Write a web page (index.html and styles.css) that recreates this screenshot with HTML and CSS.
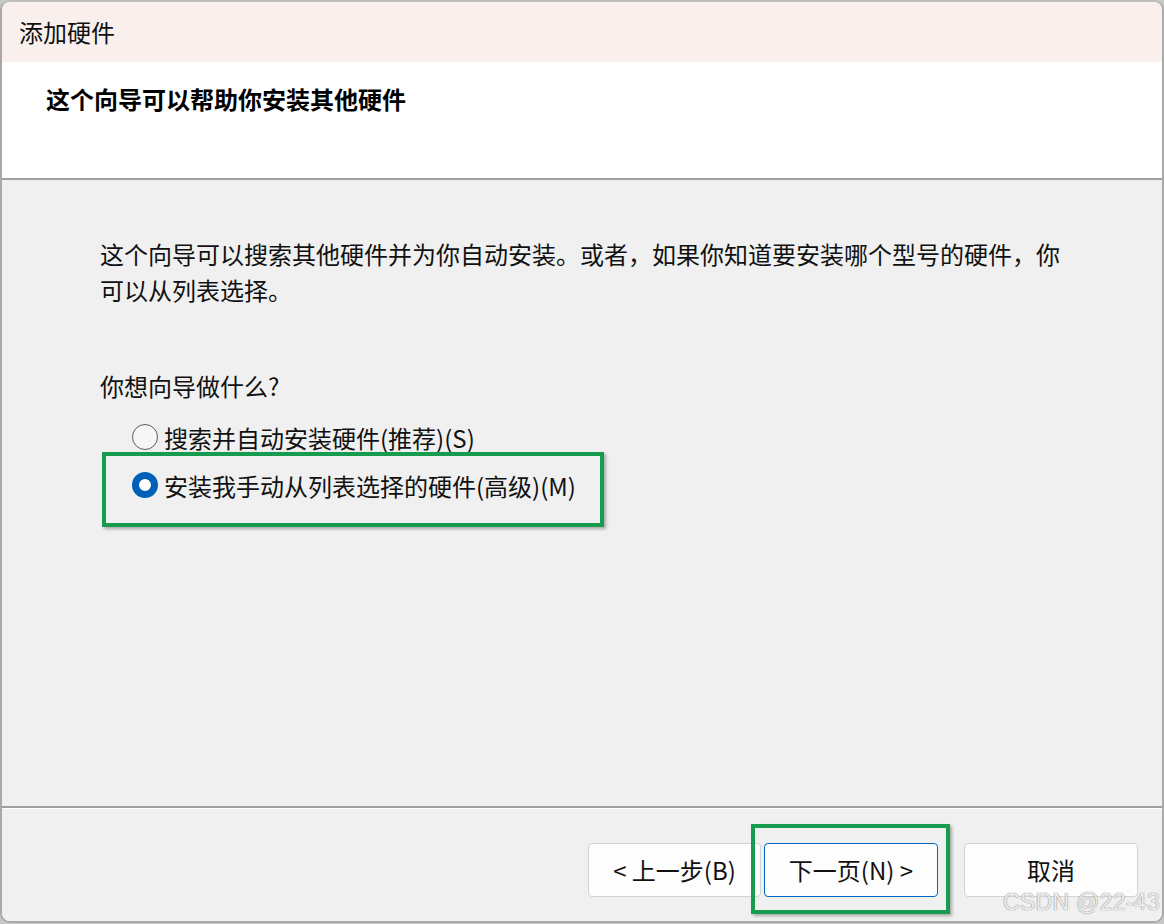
FILE: index.html
```html
<!DOCTYPE html>
<html lang="zh-CN">
<head>
<meta charset="utf-8">
<title>添加硬件</title>
<link rel="stylesheet" href="styles.css">
</head>
<body>
<div class="window">
  <div class="titlebar">添加硬件</div>
  <div class="header">
    <h1 class="header-title">这个向导可以帮助你安装其他硬件</h1>
  </div>
  <div class="content">
    <p class="intro">这个向导可以搜索其他硬件并为你自动安装。或者，如果你知道要安装哪个型号的硬件，你可以从列表选择。</p>
    <p class="question">你想向导做什么?</p>
    <div class="options">
      <div class="option">
        <span class="radio"></span>
        <span class="option-label">搜索并自动安装硬件(推荐)(S)</span>
      </div>
      <div class="option highlight-row">
        <span class="radio checked"></span>
        <span class="option-label">安装我手动从列表选择的硬件(高级)(M)</span>
      </div>
    </div>
  </div>
  <div class="footer">
    <button class="btn btn-back">&lt; 上一步(B)</button>
    <button class="btn btn-next">下一页(N) &gt;</button>
    <button class="btn btn-cancel">取消</button>
    <span class="watermark">CSDN @22-43</span>
  </div>
</div>
</body>
</html>
```

FILE: styles.css
```css
*, *::before, *::after {
  box-sizing: border-box;
}

html, body {
  margin: 0;
  padding: 0;
}

body {
  width: 1164px;
  height: 924px;
  background: #c8c8c8;
  font-family: "Noto Sans CJK SC", "Noto Sans", sans-serif;
  color: #000;
  overflow: hidden;
}

.window {
  width: 1164px;
  height: 923px;
  border: 2px solid #a9a9a9;
  border-top-color: #bdbdbd;
  border-radius: 10px;
  overflow: hidden;
  display: flex;
  flex-direction: column;
  background: #f0f0f0;
}

.titlebar {
  height: 60px;
  flex: 0 0 60px;
  background: #f9f0ee;
  padding-left: 17px;
  font-size: 24px;
  line-height: 60px;
  color: #111;
}

.header {
  flex: 0 0 118px;
  height: 118px;
  background: #fff;
  border-bottom: 2px solid #a0a0a0;
  padding: 19px 0 0 44px;
}

.header-title {
  margin: 0;
  font-size: 24px;
  font-weight: 700;
  line-height: 36px;
}

.content {
  flex: 0 0 626px;
  height: 626px;
  padding: 56px 0 0 98px;
  background: #f0f0f0;
}

.intro {
  margin: 0;
  width: 970px;
  font-size: 24px;
  line-height: 36px;
  color: #111;
}

.question {
  margin: 60px 0 0 0;
  font-size: 24px;
  line-height: 36px;
  color: #111;
}

.options {
  margin-top: 9px;
}

.option {
  position: relative;
  height: 48px;
  display: flex;
  align-items: center;
  font-size: 24px;
  color: #111;
}

.radio {
  width: 26px;
  height: 26px;
  margin-left: 32px;
  margin-right: 6px;
  border-radius: 50%;
  border: 1.5px solid #5c5c5c;
  background: #f6f6f6;
  flex: 0 0 26px;
}

.radio.checked {
  border: 7px solid #0060b8;
  background: #fff;
}

.highlight-row::after {
  content: "";
  position: absolute;
  left: 2px;
  top: -9px;
  width: 502px;
  height: 75px;
  border: 4px solid #169b4f;
  box-shadow: 2px 2px 3px rgba(0, 0, 0, 0.3);
  pointer-events: none;
}

.footer {
  position: relative;
  flex: 1 1 auto;
  border-top: 2px solid #a0a0a0;
  box-shadow: inset 0 1px 0 #ffffff;
  padding: 35px 24px 0 0;
  display: flex;
  justify-content: flex-end;
  align-items: flex-start;
  background: #f0f0f0;
}

.btn {
  width: 174px;
  height: 54px;
  border: 1px solid #d3d3d3;
  border-radius: 4px;
  background: #fdfdfd;
  font-family: "Noto Sans CJK SC", "Noto Sans", sans-serif;
  font-size: 24px;
  color: #111;
  padding: 0;
  line-height: 50px;
}

.btn-back {
  width: 173px;
}

.btn-next {
  position: relative;
  margin-left: 3px;
  border-color: #0067c0;
}

.btn-next::after {
  content: "";
  position: absolute;
  left: -14px;
  top: -20px;
  width: 199px;
  height: 90px;
  border: 4px solid #169b4f;
  box-shadow: 2px 2px 3px rgba(0, 0, 0, 0.3);
}

.btn-cancel {
  margin-left: 26px;
}

.watermark {
  position: absolute;
  right: 2px;
  bottom: 5px;
  font-family: "Liberation Sans", Arial, sans-serif;
  font-size: 23px;
  color: rgba(255, 255, 255, 0.85);
  text-shadow: 0 0 1px #8a8a8a, 0 0 1px #8a8a8a;
  letter-spacing: 0.3px;
}
```
